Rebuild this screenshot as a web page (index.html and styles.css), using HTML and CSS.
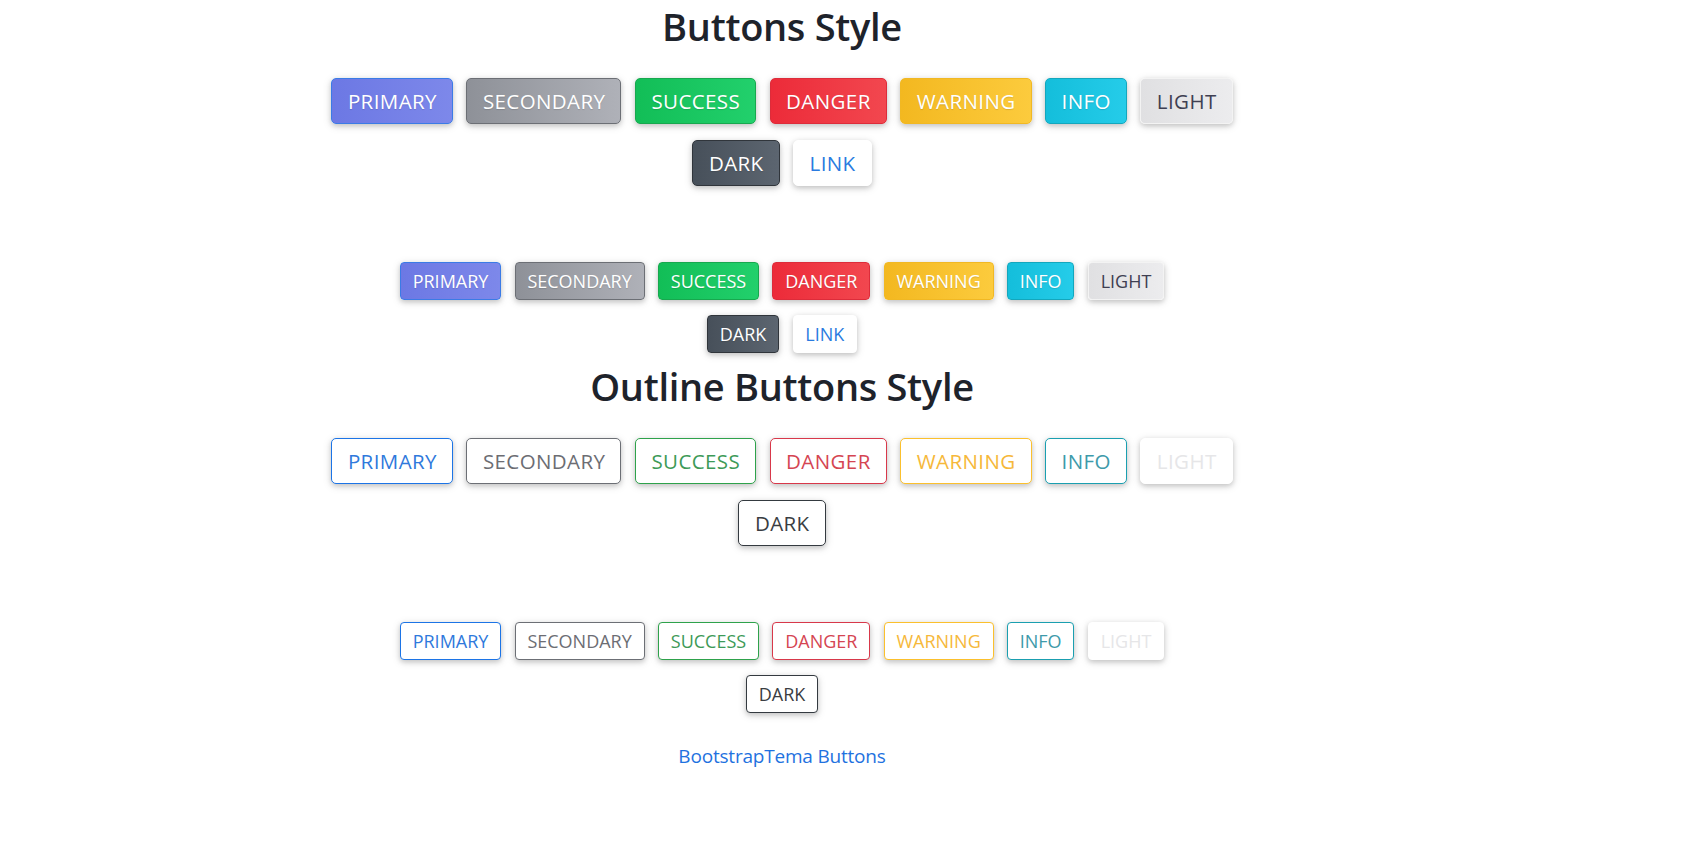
FILE: index.html
```html
<!DOCTYPE html>
<html lang="en">
<head>
<meta charset="utf-8">
<title>Buttons Style</title>
<link rel="stylesheet" href="styles.css">
</head>
<body>
<div class="page">
  <h1 class="title title-first">Buttons Style</h1>
  <div class="group group-lg">
    <a class="btn btn-primary">PRIMARY</a>
    <a class="btn btn-secondary">SECONDARY</a>
    <a class="btn btn-success">SUCCESS</a>
    <a class="btn btn-danger">DANGER</a>
    <a class="btn btn-warning">WARNING</a>
    <a class="btn btn-info">INFO</a>
    <a class="btn btn-light">LIGHT</a>
    <a class="btn btn-dark">DARK</a>
    <a class="btn btn-link">LINK</a>
  </div>
  <div class="group group-sm">
    <a class="btn btn-primary">PRIMARY</a>
    <a class="btn btn-secondary">SECONDARY</a>
    <a class="btn btn-success">SUCCESS</a>
    <a class="btn btn-danger">DANGER</a>
    <a class="btn btn-warning">WARNING</a>
    <a class="btn btn-info">INFO</a>
    <a class="btn btn-light">LIGHT</a>
    <a class="btn btn-dark">DARK</a>
    <a class="btn btn-link">LINK</a>
  </div>
  <h1 class="title">Outline Buttons Style</h1>
  <div class="group group-lg">
    <a class="btn btn-o-primary">PRIMARY</a>
    <a class="btn btn-o-secondary">SECONDARY</a>
    <a class="btn btn-o-success">SUCCESS</a>
    <a class="btn btn-o-danger">DANGER</a>
    <a class="btn btn-o-warning">WARNING</a>
    <a class="btn btn-o-info">INFO</a>
    <a class="btn btn-o-light">LIGHT</a>
    <a class="btn btn-o-dark">DARK</a>
  </div>
  <div class="group group-sm">
    <a class="btn btn-o-primary">PRIMARY</a>
    <a class="btn btn-o-secondary">SECONDARY</a>
    <a class="btn btn-o-success">SUCCESS</a>
    <a class="btn btn-o-danger">DANGER</a>
    <a class="btn btn-o-warning">WARNING</a>
    <a class="btn btn-o-info">INFO</a>
    <a class="btn btn-o-light">LIGHT</a>
    <a class="btn btn-o-dark">DARK</a>
  </div>
  <p class="credit"><a class="credit-link">BootstrapTema Buttons</a></p>
</div>
</body>
</html>
```

FILE: styles.css
```css
html, body {
  margin: 0;
  padding: 0;
  background: #ffffff;
}

body {
  font-family: "Open Sans", "Noto Sans", sans-serif;
  color: #212529;
}

.page {
  width: 1564px;
  padding-top: 3px;
  display: flex;
  flex-direction: column;
  align-items: center;
}

.title {
  margin: 10.5px 0 0;
  font-size: 38px;
  line-height: 46px;
  font-weight: 600;
  letter-spacing: -0.3px;
  color: #1e232b;
  text-align: center;
}

.title-first {
  margin-top: 0;
}

.group {
  display: flex;
  flex-wrap: wrap;
  justify-content: center;
  column-gap: 13.5px;
}

.group-lg {
  width: 960px;
  row-gap: 16.5px;
  margin-top: 28.5px;
}

.group-sm {
  width: 805px;
  row-gap: 15px;
  margin-top: 75.5px;
}

.btn {
  display: block;
  text-align: center;
  white-space: nowrap;
  border: 1px solid transparent;
  color: #ffffff;
  box-shadow: 0 2px 5px 0 rgba(0, 0, 0, 0.16), 0 2px 10px 0 rgba(0, 0, 0, 0.12);
  text-shadow: 0 1px 1px rgba(0, 0, 0, 0.12);
}

.group-lg .btn {
  font-size: 20.5px;
  letter-spacing: 0.4px;
  line-height: 28px;
  padding: 8px 15px 8px 15.5px;
  border-radius: 5px;
}

.group-sm .btn {
  font-size: 18px;
  letter-spacing: 0;
  line-height: 24px;
  padding: 6px 11.75px 6px 11.75px;
  border-radius: 4px;
}

.btn-primary {
  background: linear-gradient(to right, #6c78e4, #7d88ea);
  border-color: #3b7be6;
}

.btn-secondary {
  background: linear-gradient(to right, #8e9198, #afb1b8);
  border-color: #6c6f75;
}

.btn-success {
  background: linear-gradient(to right, #12be57, #22d06c);
  border-color: #17a84e;
}

.btn-danger {
  background: linear-gradient(to right, #ec2b39, #f2474f);
  border-color: #dd2c3a;
}

.btn-warning {
  background: linear-gradient(to right, #f3b820, #fccb3d);
  border-color: #f1b823;
}

.btn-info {
  background: linear-gradient(to right, #14bedb, #25cce9);
  border-color: #13a7bd;
}

.btn-light {
  background: linear-gradient(to right, #e0e0e2, #ececee);
  border-color: #f3f3f3;
  color: #3f3f52;
  text-shadow: none;
}

.btn-dark {
  background: linear-gradient(to right, #47505a, #5c6570);
  border-color: #30353b;
}

.btn-link {
  background: #ffffff;
  border-color: #ffffff;
  color: #2a7be0;
  text-shadow: none;
}

.btn-o-primary,
.btn-o-secondary,
.btn-o-success,
.btn-o-danger,
.btn-o-warning,
.btn-o-info,
.btn-o-light,
.btn-o-dark {
  background: #ffffff;
  text-shadow: none;
}

.btn-o-primary { border-color: #1c74e6; color: #2f79dc; }
.btn-o-secondary { border-color: #6c6f75; color: #6c6d73; }
.btn-o-success { border-color: #2ea24b; color: #3d9a57; }
.btn-o-danger { border-color: #d8384a; color: #d54552; }
.btn-o-warning { border-color: #fbc02d; color: #f6b83a; }
.btn-o-info { border-color: #1a9fb0; color: #3e9aaa; }
.btn-o-light { border-color: #ffffff; color: #e6e6e8; }
.btn-o-dark { border-color: #343a40; color: #3a3d42; }

.credit {
  margin: 29px 0 0;
  font-size: 19px;
  line-height: 28px;
  text-align: center;
}

.credit-link {
  color: #1f72e0;
  letter-spacing: -0.2px;
}
```
